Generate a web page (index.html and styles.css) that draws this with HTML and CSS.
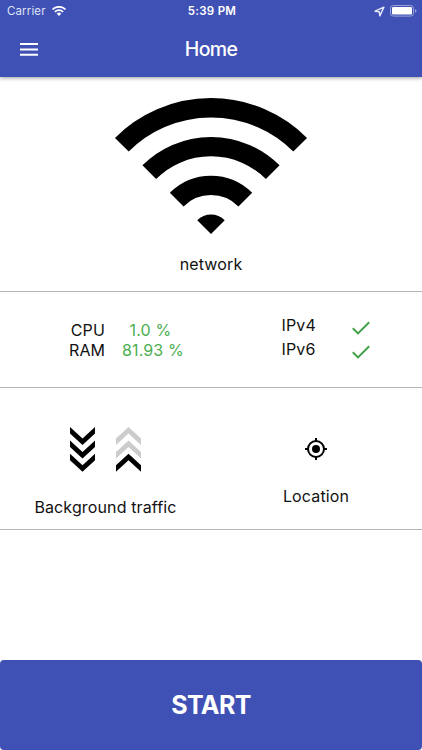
FILE: index.html
```html
<!DOCTYPE html>
<html lang="en">
<head>
  <meta charset="UTF-8">
  <title>Home</title>
  <link rel="stylesheet" href="styles.css">
</head>
<body>
<div class="app">
  <header class="header">
    <div class="status-bar">
      <div class="status-left">
        <span class="carrier">Carrier</span>
        <svg class="signal" viewBox="-5 -7 10 7">
          <path d="M-4.6 -4.6A6.5 6.5 0 0 1 4.6 -4.6M-2.9 -2.9A4.1 4.1 0 0 1 2.9 -2.9" fill="none" stroke="#fff" stroke-width="1.3"/>
          <path d="M0 0L-1.6 -1.6A2.26 2.26 0 0 1 1.6 -1.6Z" fill="#fff"/>
        </svg>
      </div>
      <span class="time">5:39 PM</span>
      <div class="status-right">
        <svg class="arrow" viewBox="0 0 10 10"><path d="M9 1L1 4.7L4.8 5.2L5.3 9Z" fill="none" stroke="#e4e7f8" stroke-width="1.3" stroke-linejoin="round"/></svg>
        <svg class="battery" viewBox="0 0 27 12">
          <rect x=".5" y=".5" width="23" height="10.6" rx="2.8" fill="none" stroke="#9aa3da"/>
          <rect x="2" y="2" width="20" height="7.6" rx="1.3" fill="#fff"/>
          <path d="M25 3.9Q26.5 4.4 26.5 5.8T25 7.7Z" fill="#9aa3da"/>
        </svg>
      </div>
    </div>
    <nav class="toolbar">
      <svg class="menu" viewBox="0 0 18 13"><path d="M0 1H18M0 6.4H18M0 11.8H18" stroke="#fff" stroke-width="2"/></svg>
      <h1 class="title">Home</h1>
    </nav>
  </header>

  <section class="network">
    <svg class="wifi" viewBox="-5 -7 10 7">
      <path d="M-4.596 -4.596A6.5 6.5 0 0 1 4.596 -4.596M-3.182 -3.182A4.5 4.5 0 0 1 3.182 -3.182M-1.768 -1.768A2.5 2.5 0 0 1 1.768 -1.768" fill="none" stroke="#000"/>
      <path d="M0 0L-.707 -.707A1 1 0 0 1 .707 -.707Z"/>
    </svg>
    <p>network</p>
  </section>

  <section class="stats">
    <div class="usage">
      <div class="labels">
        <p>CPU</p>
        <p>RAM</p>
      </div>
      <div class="values">
        <p class="cpu">1.0 %</p>
        <p>81.93 %</p>
      </div>
    </div>
    <div class="protocols">
      <span>IPv4</span>
      <svg class="check" viewBox="0 0 18 14"><path d="M.8 7.2L6 12.4L17.2 1.2" fill="none" stroke="#43a047" stroke-width="2"/></svg>
      <span>IPv6</span>
      <svg class="check" viewBox="0 0 18 14"><path d="M.8 7.2L6 12.4L17.2 1.2" fill="none" stroke="#43a047" stroke-width="2"/></svg>
    </div>
  </section>

  <section class="activity">
    <div class="traffic">
      <div class="arrows">
        <svg class="chevrons" viewBox="0 0 25 45">
          <path d="M0 0L12.5 11.5L25 0V6.5L12.5 18L0 6.5Z"/>
          <path d="M0 13.4L12.5 24.9L25 13.4V19.9L12.5 31.4L0 19.9Z"/>
          <path d="M0 26.8L12.5 38.3L25 26.8V33.3L12.5 44.8L0 33.3Z"/>
        </svg>
        <svg class="chevrons" viewBox="0 0 25 45">
          <path d="M0 18L12.5 6.5L25 18V11.5L12.5 0L0 11.5Z" fill="#ccc"/>
          <path d="M0 31.4L12.5 19.9L25 31.4V24.9L12.5 13.4L0 24.9Z" fill="#ccc"/>
          <path d="M0 44.8L12.5 33.3L25 44.8V38.3L12.5 26.8L0 38.3Z"/>
        </svg>
      </div>
      <p>Background traffic</p>
    </div>
    <div class="location">
      <svg class="target" viewBox="0 0 24 24">
        <circle cx="12" cy="12" r="4"/>
        <circle cx="12" cy="12" r="8" fill="none" stroke="#000" stroke-width="2"/>
        <path d="M12 1V4M12 20V23M1 12H4M20 12H23" stroke="#000" stroke-width="2"/>
      </svg>
      <p>Location</p>
    </div>
  </section>

  <button class="start">START</button>
</div>
</body>
</html>
```

FILE: styles.css
```css
* {
  margin: 0;
  padding: 0;
  box-sizing: border-box;
}
body {
  background-color: #fff;
  color: #111;
  font-family: Inter, "Liberation Sans", sans-serif;
  font-size: 16px;
  line-height: 20px;
  letter-spacing: 0.13px;
}
svg {
  display: block;
}
.app {
  display: flex;
  flex-direction: column;
  height: 750px;
  overflow: hidden;
}
.header {
  height: 77px;
  background-color: #3f51b5;
  color: #fff;
  box-shadow: 0 1px 4px rgba(0, 0, 0, 0.4);
}
.status-bar {
  display: grid;
  grid-template-columns: 1fr auto 1fr;
  align-items: center;
  height: 22px;
  padding: 0 5px 0 7px;
  font-size: 11.5px;
}
.status-left,
.status-right {
  display: flex;
  align-items: center;
}
.carrier {
  color: #dfe3f6;
}
.signal {
  width: 14px;
  height: 10px;
  margin-left: 6px;
}
.time {
  font-weight: 600;
  letter-spacing: 0.3px;
}
.status-right {
  justify-content: flex-end;
}
.arrow {
  width: 11px;
  height: 11px;
  margin-right: 5px;
}
.battery {
  width: 27px;
  height: 12px;
}
.toolbar {
  display: grid;
  grid-template-columns: 1fr auto 1fr;
  align-items: center;
  height: 54px;
  padding: 0 20px;
}
.menu {
  width: 18px;
  height: 13px;
}
.title {
  font-size: 19.5px;
  font-weight: 500;
  letter-spacing: -0.7px;
}
.network {
  height: 215px;
  padding-top: 21px;
  border-bottom: 1px solid #b5b5b5;
  text-align: center;
}
.wifi {
  width: 194px;
  height: 136px;
  margin: 0 auto 20px;
}
.stats {
  display: grid;
  grid-template-columns: 1fr 1fr;
  height: 96px;
  border-bottom: 1px solid #b5b5b5;
}
.usage {
  display: flex;
  gap: 17px;
  padding: 28px 0 0 69px;
  white-space: nowrap;
}
.labels {
  width: 36px;
  text-align: right;
}
.values {
  color: #4caf50;
  text-align: center;
}
.cpu {
  padding-right: 5px;
}
.protocols {
  display: grid;
  grid-template-columns: 34px 18px;
  grid-auto-rows: 24px;
  column-gap: 36px;
  justify-content: center;
  padding: 23px 0 0 18px;
}
.check {
  width: 18px;
  height: 14px;
  margin-top: 6px;
}
.activity {
  display: grid;
  grid-template-columns: 1fr 1fr;
  height: 142px;
  border-bottom: 1px solid #b5b5b5;
  text-align: center;
}
.traffic {
  padding-top: 39px;
}
.arrows {
  display: flex;
  justify-content: center;
  gap: 21px;
  margin-bottom: 25px;
}
.chevrons {
  width: 25px;
  height: 45px;
}
.location {
  padding: 49px 1px 0 0;
}
.target {
  width: 24px;
  height: 24px;
  margin: 0 auto 25px;
}
.start {
  width: 100%;
  height: 90px;
  margin-top: auto;
  border: none;
  border-radius: 4px;
  background-color: #3f51b5;
  color: #fff;
  font-family: inherit;
  font-size: 25px;
  font-weight: 700;
  letter-spacing: -0.6px;
}
```
